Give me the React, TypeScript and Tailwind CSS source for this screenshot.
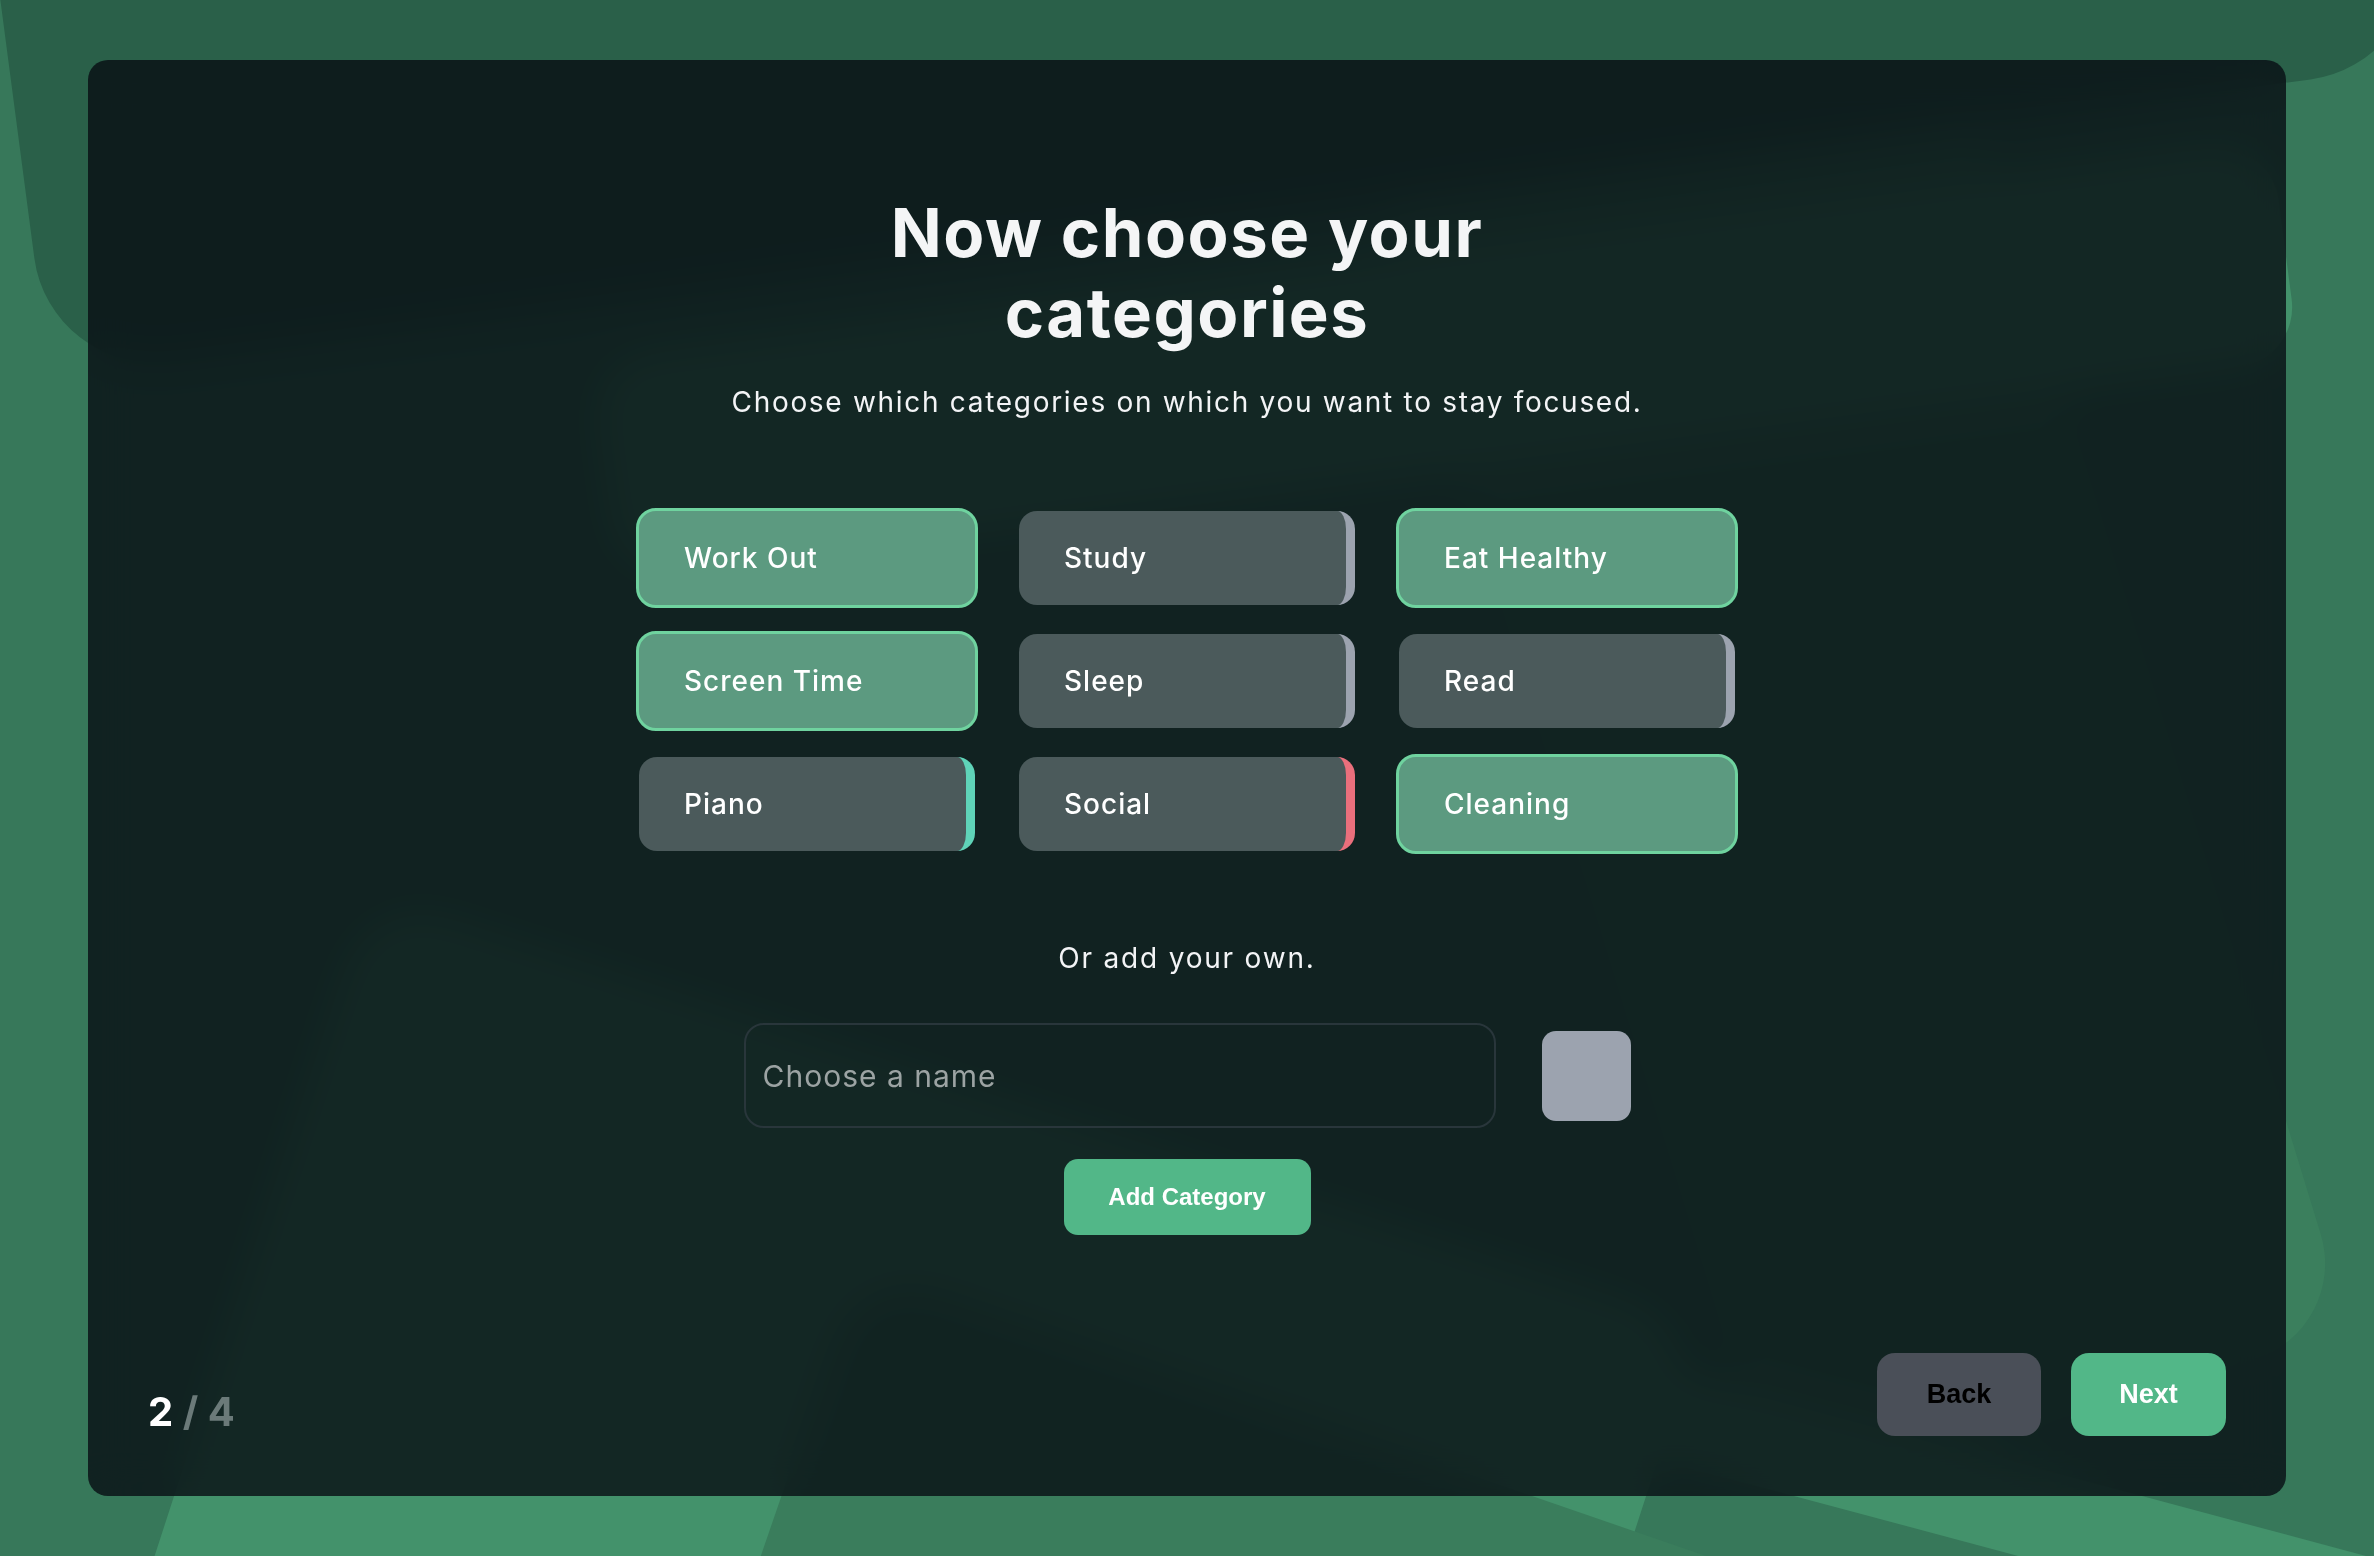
import { useState } from 'react'

type Category = {
  name: string
  selected: boolean
  bar?: string
}

const CATEGORIES: Category[] = [
  { name: 'Work Out', selected: true },
  { name: 'Study', selected: false, bar: 'border-r-[#9ca3af]' },
  { name: 'Eat Healthy', selected: true },
  { name: 'Screen Time', selected: true },
  { name: 'Sleep', selected: false, bar: 'border-r-[#9ca3af]' },
  { name: 'Read', selected: false, bar: 'border-r-[#9ca3af]' },
  { name: 'Piano', selected: false, bar: 'border-r-[#5fd3b8]' },
  { name: 'Social', selected: false, bar: 'border-r-[#ea6f7c]' },
  { name: 'Cleaning', selected: true },
]

function CategoryButton({ name, selected, bar }: Category) {
  if (selected) {
    return (
      <button className="flex h-[100px] w-full items-center rounded-[20px] border-[3px] border-[#6fd39f] bg-[#5c9a80] pl-[45px] text-left text-[28px] font-medium tracking-[1px] text-white">
        {name}
      </button>
    )
  }
  return (
    <div className="h-[100px] w-full p-[3px]">
      <button
        className={`flex h-full w-full items-center rounded-[18px] border-r-[9px] ${bar} bg-[#4b5a5b] pl-[45px] text-left text-[28px] font-medium tracking-[1px] text-white`}>
        {name}
      </button>
    </div>
  )
}

// decorative blobs behind the glass card
function Background() {
  return (
    <>
      <div className="absolute left-[370px] top-[893px] h-[1200px] w-[1400px] origin-top-left rotate-[18deg] rounded-[80px] bg-[#43926b]" />
      <div className="absolute left-[861px] top-[1265px] h-[800px] w-[2000px] origin-top-left rotate-[19deg] rounded-[80px] bg-[#3a7d5c]" />
      <div className="absolute left-[1750px] top-[-70px] h-[1400px] w-[600px] origin-bottom-right -rotate-[17deg] rounded-[100px] bg-[#3b7f5d]" />
      <div className="absolute left-[1000px] top-[1190px] h-[90px] w-[1600px] origin-top-left rotate-[15deg] bg-[#43926b]" />
      <div className="absolute left-[620px] top-[360px] h-[220px] w-[1694px] origin-bottom-left -rotate-[7.5deg] rounded-[60px] bg-[#43926b]" />
      <div className="absolute left-[50px] top-[-523px] h-[900px] w-[2400px] origin-bottom-left -rotate-[7.5deg] rounded-[120px] bg-[#2a6049]" />
    </>
  )
}

export default function App() {
  const [name, setName] = useState('')

  return (
    <div className="relative h-screen w-full overflow-hidden bg-[#37785a] px-[88px] py-[60px] font-['Inter',sans-serif]">
      <Background />
      <div className="relative z-10 flex h-full w-full flex-col items-center rounded-[20px] bg-[#070d13]/80 pt-[133px] backdrop-blur-[20px]">
        <h1 className="text-center text-[67px] font-bold leading-[80px] tracking-[1.5px] text-[#f4f5f6]">
          Now choose your
          <br />
          categories
        </h1>
        <p className="mt-[31px] text-[28px] leading-[36px] tracking-[1.7px] text-[#f3f4f6]">
          Choose which categories on which you want to stay focused.
        </p>

        <div className="mt-[88px] grid w-[1102px] grid-cols-3 gap-x-[38px] gap-y-[23px]">
          {CATEGORIES.map((c) => (
            <CategoryButton key={c.name} {...c} />
          ))}
        </div>

        <p className="mt-[86px] text-[28px] leading-[36px] tracking-[1.8px] text-[#f3f4f6]">Or add your own.</p>

        <div className="mt-[47px] flex items-center gap-[46px]">
          <input
            value={name}
            onChange={(e) => setName(e.target.value)}
            placeholder="Choose a name"
            className="h-[105px] w-[752px] rounded-[20px] border-2 border-[#29363b] bg-transparent pl-[17px] text-[30px] tracking-[1px] text-white outline-none placeholder:text-[#9ca3a3]"
          />
          <div className="h-[90px] w-[89px] rounded-[14px] bg-[#9ca3af]" />
        </div>

        <button className="mt-[31px] h-[76px] w-[247px] rounded-[14px] bg-[#52b788] font-['Liberation_Sans',Arial,sans-serif] text-[24px] font-bold text-white">
          Add Category
        </button>

        <div className="mt-auto flex w-full items-end justify-between px-[60px] pb-[60px]">
          <p className="text-[40px] font-bold leading-[48px] text-white">
            2 <span className="text-[#6b7a79]">/ 4</span>
          </p>
          <div className="flex gap-[30px] font-['Liberation_Sans',Arial,sans-serif] text-[27px] font-bold">
            <button className="h-[83px] w-[164px] rounded-[18px] bg-[#4a4f58] text-black">Back</button>
            <button className="h-[83px] w-[155px] rounded-[18px] bg-[#52b788] text-white">Next</button>
          </div>
        </div>
      </div>
    </div>
  )
}
